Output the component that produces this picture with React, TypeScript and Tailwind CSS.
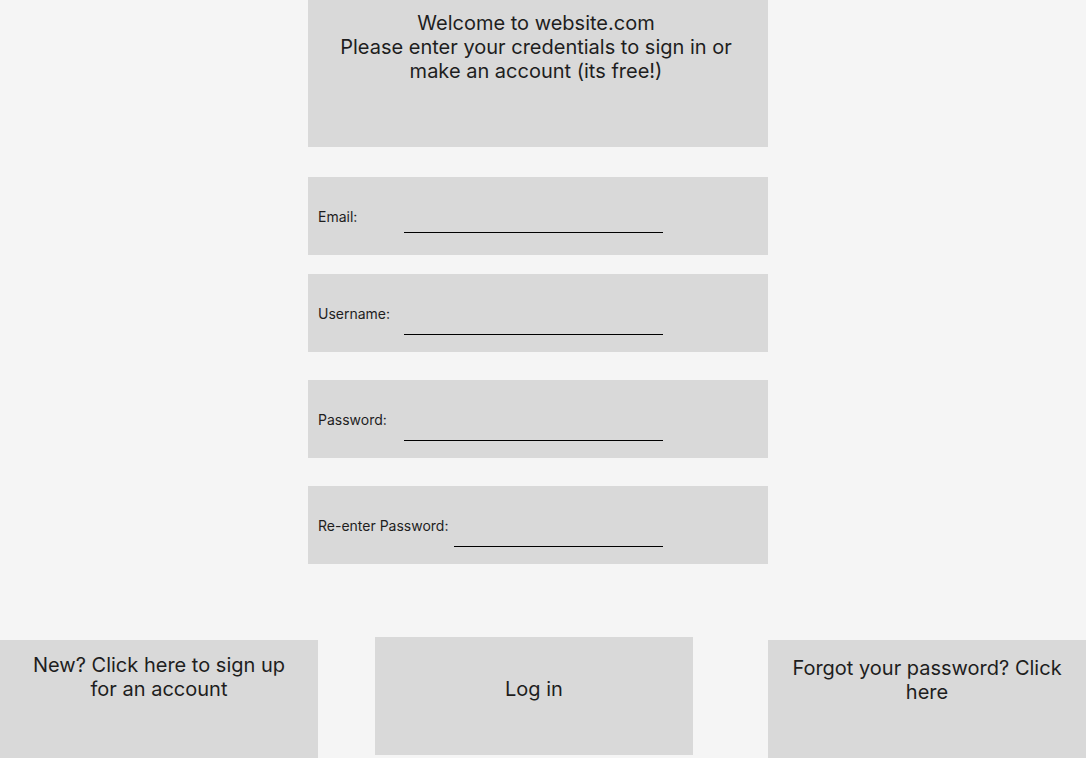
const fields = [
  { label: "Email:", labelWidth: "w-[86px]", lineWidth: "w-[259px]", lineTop: "mt-[55px]", gap: "mt-[30px]" },
  { label: "Username:", labelWidth: "w-[86px]", lineWidth: "w-[259px]", lineTop: "mt-[60px]", gap: "mt-[19px]" },
  { label: "Password:", labelWidth: "w-[86px]", lineWidth: "w-[259px]", lineTop: "mt-[60px]", gap: "mt-[28px]" },
  { label: "Re-enter Password:", labelWidth: "w-[136px]", lineWidth: "w-[209px]", lineTop: "mt-[60px]", gap: "mt-[28px]" },
];

export default function App() {
  return (
    <div className="w-[1086px] h-[758px] overflow-hidden bg-[#f5f5f5] text-[#1e1e1e] font-['Inter','Noto_Sans',sans-serif]">
      <div className="flex flex-col items-start pl-[308px]">
        {/* header */}
        <div className="w-[460px] h-[147px] bg-[#d9d9d9] pt-[11px] pl-[18px] pr-[22px] text-center text-[20px] leading-[24px]">
          Welcome to website.com
          <br />
          Please enter your credentials to sign in or make an account (its free!)
        </div>

        {fields.map((f) => (
          <div key={f.label} className={`${f.gap} w-[460px] h-[78px] bg-[#d9d9d9] flex pl-[10px]`}>
            <span className={`${f.labelWidth} self-center pt-[1px] text-[14px] leading-[18px]`}>{f.label}</span>
            <div className={`${f.lineWidth} ${f.lineTop} h-px bg-black`} />
          </div>
        ))}
      </div>

      {/* bottom actions */}
      <div className="mt-[73px] flex items-start justify-between text-[20px] leading-[24px] text-center">
        <button className="mt-[3px] w-[318px] h-[118px] bg-[#d9d9d9] px-[18px] pt-[13px] flex flex-col items-center justify-start">
          New? Click here to sign up for an account
        </button>
        <button className="ml-[57px] w-[318px] h-[118px] bg-[#d9d9d9] pt-[40px] flex flex-col items-center justify-start">
          Log in
        </button>
        <button className="ml-[75px] mt-[3px] w-[318px] h-[118px] bg-[#d9d9d9] px-[18px] pt-[16px] flex flex-col items-center justify-start">
          Forgot your password? Click here
        </button>
      </div>
    </div>
  );
}
